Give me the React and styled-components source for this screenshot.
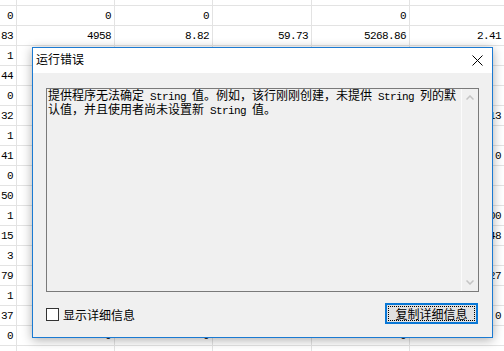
import React from 'react';
import styled, { createGlobalStyle } from 'styled-components';

const Global = createGlobalStyle`
  html, body { margin: 0; padding: 0; background: #fff; overflow: hidden; }
  #root { width: 504px; height: 351px; }
`;

const Screen = styled.div`
  position: relative;
  width: 504px;
  height: 351px;
  overflow: hidden;
  background: #fff;
  font-family: "Noto Sans CJK SC", sans-serif;
`;

const Sheet = styled.div`
  display: flex;
  flex-direction: column;
`;

const Row = styled.div`
  display: grid;
  grid-template-columns: 17px 98px 98px 99px 98px 95px;
  height: ${(p) => p.$h ?? 20}px;
  flex: none;
  box-sizing: border-box;
  border-bottom: 1px solid #e3e3e3;
`;

const Cell = styled.div`
  border-right: 1px solid #e3e3e3;
  font-family: "Liberation Mono", monospace;
  font-size: 11px;
  letter-spacing: -0.6px;
  line-height: 19px;
  padding-top: 1px;
  padding-right: 3px;
  text-align: right;
  white-space: nowrap;
  overflow: hidden;
  color: #000;
  box-sizing: border-box;
`;

const Dialog = styled.div`
  position: absolute;
  left: 32px;
  top: 47px;
  width: 461px;
  height: 291px;
  box-sizing: border-box;
  border: 1px solid #1b7ad2;
  background: #f0f0f0;
  box-shadow: 0 2px 10px rgba(0, 0, 0, 0.32);
  display: flex;
  flex-direction: column;
`;

const TitleBar = styled.div`
  height: 25px;
  flex: none;
  background: #fff;
  display: flex;
  align-items: center;
  justify-content: space-between;
  padding-left: 3px;
  padding-right: 9px;
`;

const Title = styled.span`
  font-size: 12px;
  line-height: 12px;
  color: #000;
  margin-top: -3px;
`;

const Body = styled.div`
  flex: 1;
  display: flex;
  flex-direction: column;
  padding: 15px 13px 13px 13px;
`;

const TextBox = styled.div`
  height: 204px;
  flex: none;
  box-sizing: border-box;
  border: 1px solid #7a7a7a;
  background: #f0f0f0;
  display: flex;
`;

const Message = styled.div`
  flex: 1;
  padding: 0 1px;
  font-size: 12px;
  line-height: 12px;
  color: #000;
`;

const Mono = styled.span`
  font-family: "Liberation Mono", monospace;
  font-size: 11px;
  letter-spacing: -0.6px;
  white-space: pre;
`;

const ScrollBar = styled.div`
  width: 17px;
  flex: none;
  box-sizing: border-box;
  border-left: 1px solid #fbfbfb;
  display: flex;
  flex-direction: column;
  justify-content: space-between;
`;

const ArrowBox = styled.div`
  height: 17px;
  display: flex;
  align-items: center;
  justify-content: center;
`;

const Footer = styled.div`
  margin-top: 11px;
  display: flex;
  align-items: center;
  justify-content: space-between;
`;

const CheckLabel = styled.label`
  display: flex;
  align-items: center;
  gap: 4px;
  font-size: 12px;
  line-height: 12px;
  color: #000;
  margin-top: 2px;
`;

const Box = styled.span`
  width: 13px;
  height: 13px;
  box-sizing: border-box;
  border: 1px solid #333;
  background: #fff;
`;

const Button = styled.button`
  width: 93px;
  height: 21px;
  margin-right: 1px;
  box-sizing: border-box;
  border: 2px solid #0a78d6;
  background: #e1e1e1;
  outline: 1px dotted #000;
  outline-offset: -4px;
  padding: 0;
  font-family: "Noto Sans CJK SC", sans-serif;
  font-size: 12px;
  line-height: 12px;
  color: #000;
`;

const rows = [
  ['0', '0', '0', '', '0', ''],
  ['83', '4958', '8.82', '59.73', '5268.86', '2.41'],
  ['1', '', '', '', '', ''],
  ['44', '', '', '', '', ''],
  ['0', '', '', '', '', ''],
  ['32', '', '', '', '', '0.13'],
  ['1', '', '', '', '', ''],
  ['41', '', '', '', '', '0'],
  ['0', '', '', '', '', ''],
  ['50', '', '', '', '', ''],
  ['1', '', '', '', '', '1.00'],
  ['15', '', '', '', '', '0.48'],
  ['3', '', '', '', '', ''],
  ['79', '', '', '', '', '0.27'],
  ['1', '', '', '', '', ''],
  ['37', '', '', '', '', '0'],
  ['0', '0', '0', '', '0', ''],
  ['', '', '', '', '', ''],
];

const Chevron = ({ up }) => (
  <svg width="8" height="5" viewBox="0 0 8 5">
    <polyline
      points={up ? '0.5,4.5 4,1 7.5,4.5' : '0.5,0.5 4,4 7.5,0.5'}
      fill="none"
      stroke="#c4c4c4"
      strokeWidth="1.5"
    />
  </svg>
);

export default function App() {
  return (
    <Screen>
      <Global />
      <Sheet>
        <Row $h={6}>
          {[0, 1, 2, 3, 4, 5].map((i) => (
            <Cell key={i} />
          ))}
        </Row>
        {rows.map((r, ri) => (
          <Row key={ri}>
            {r.map((v, ci) => (
              <Cell key={ci}>{v}</Cell>
            ))}
          </Row>
        ))}
      </Sheet>

      <Dialog>
        <TitleBar>
          <Title>运行错误</Title>
          <svg width="11" height="11" viewBox="0 0 11 11">
            <path d="M0.5 0.5 L10.5 10.5 M10.5 0.5 L0.5 10.5" stroke="#000" strokeWidth="1" fill="none" />
          </svg>
        </TitleBar>
        <Body>
          <TextBox>
            <Message>
              提供程序无法确定<Mono> String </Mono>值。例如，该行刚刚创建，未提供<Mono> String </Mono>列的默认值，并且使用者尚未设置新<Mono> String </Mono>值。
            </Message>
            <ScrollBar>
              <ArrowBox>
                <Chevron up />
              </ArrowBox>
              <ArrowBox>
                <Chevron />
              </ArrowBox>
            </ScrollBar>
          </TextBox>
          <Footer>
            <CheckLabel>
              <Box />
              显示详细信息
            </CheckLabel>
            <Button>复制详细信息</Button>
          </Footer>
        </Body>
      </Dialog>
    </Screen>
  );
}
